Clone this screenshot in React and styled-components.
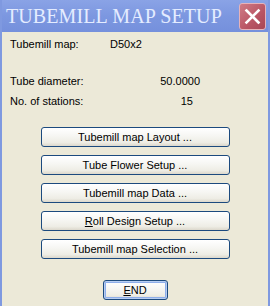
import React from "react";
import styled, { createGlobalStyle } from "styled-components";

const Global = createGlobalStyle`
  html, body { margin: 0; padding: 0; background: #ece9d8; }
  body { font-family: "Liberation Sans", Tahoma, Arial, sans-serif; }
`;

const Window = styled.div`
  width: 270px;
  height: 306px;
  box-sizing: border-box;
  background: #ece9d8;
  border-left: 2px solid #7f99e0;
  border-right: 2px solid #7f99e0;
  display: flex;
  flex-direction: column;
  overflow: hidden;
`;

const TitleBar = styled.div`
  height: 32px;
  margin: 0 -2px;
  background: linear-gradient(to bottom, #8aa3e6 0%, #7c97e0 50%, #7590dc 100%);
  display: flex;
  align-items: center;
  justify-content: space-between;
  padding: 0 4px 0 6px;
  box-sizing: border-box;
  flex-shrink: 0;
`;

const Title = styled.div`
  font-family: "Liberation Serif", "Times New Roman", serif;
  font-size: 20px;
  letter-spacing: 0.1px;
  color: #e4ecff;
  line-height: 30px;
  white-space: nowrap;
`;

const CloseButton = styled.div`
  width: 27px;
  height: 27px;
  box-sizing: border-box;
  background: linear-gradient(135deg, #cf7b86 0%, #b95564 60%, #a84656 100%);
  border: 1px solid #e6b3ba;
  border-radius: 3px;
  display: flex;
  align-items: center;
  justify-content: center;
`;

const Content = styled.div`
  display: flex;
  flex-direction: column;
  padding: 2px 0 0 8px;
`;

const InfoRow = styled.div`
  display: flex;
  height: 20px;
  align-items: center;
  font-size: 11px;
  color: #000;
  margin-top: ${(p) => p.$gap || 0}px;
`;

const Label = styled.span`
  width: ${(p) => p.$w}px;
  flex-shrink: 0;
`;

const Value = styled.span`
  width: ${(p) => p.$w}px;
  text-align: ${(p) => p.$align || "left"};
`;

const ButtonStack = styled.div`
  display: flex;
  flex-direction: column;
  align-items: center;
  gap: 8px;
  margin-top: 16px;
`;

const Button = styled.div`
  width: ${(p) => p.$w}px;
  height: 20px;
  box-sizing: border-box;
  border: 1px solid #1c4a7e;
  border-radius: 3px;
  background: linear-gradient(to bottom, #ffffff 0%, #f7f7f4 40%, #eeede5 80%, #dcd8cc 100%);
  display: flex;
  align-items: center;
  justify-content: center;
  font-size: 11px;
  color: #000;
  white-space: nowrap;
  box-shadow: ${(p) => (p.$default ? "inset 0 0 0 1px #b7cdf1, inset 0 0 0 2px #8eaeea" : "none")};
`;

const Key = styled.span`
  text-decoration: underline;
  text-underline-offset: 1px;
`;

const EndRow = styled.div`
  display: flex;
  justify-content: center;
  margin-top: 21px;
`;

function InfoBlock() {
  return (
    <Content>
      <InfoRow>
        <Label $w={100}>Tubemill map:</Label>
        <Value>D50x2</Value>
      </InfoRow>
      <InfoRow $gap={17}>
        <Label $w={100}>Tube diameter:</Label>
        <Value $w={90} $align="right">50.0000</Value>
      </InfoRow>
      <InfoRow>
        <Label $w={100}>No. of stations:</Label>
        <Value $w={83} $align="right">15</Value>
      </InfoRow>
    </Content>
  );
}

export default function App() {
  return (
    <>
      <Global />
      <Window>
        <TitleBar>
          <Title>TUBEMILL MAP SETUP</Title>
          <CloseButton>
            <svg width="17" height="17" viewBox="0 0 17 17">
              <path d="M2.5 2.5 L14.5 14.5 M14.5 2.5 L2.5 14.5" stroke="#ffffff" strokeWidth="2.6" strokeLinecap="square" />
            </svg>
          </CloseButton>
        </TitleBar>
        <InfoBlock />
        <ButtonStack>
          <Button $w={189}>Tubemill map Layout ...</Button>
          <Button $w={189}>Tube Flower Setup ...</Button>
          <Button $w={189}>Tubemill map Data ...</Button>
          <Button $w={189}><Key>R</Key>oll Design Setup ...</Button>
          <Button $w={189}>Tubemill map Selection ...</Button>
        </ButtonStack>
        <EndRow>
          <Button $w={65} $default><Key>E</Key>ND</Button>
        </EndRow>
      </Window>
    </>
  );
}
